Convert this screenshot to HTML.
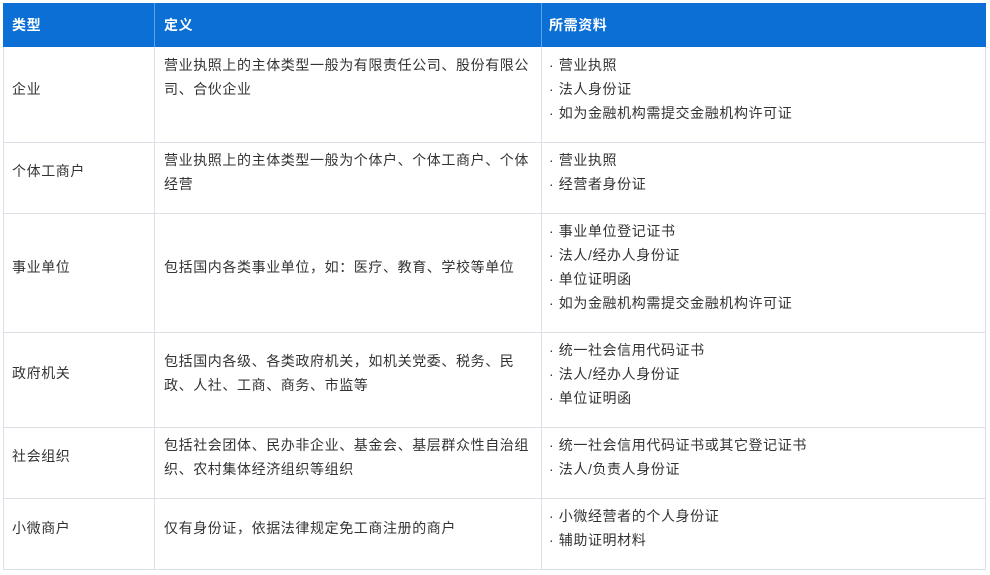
<!DOCTYPE html>
<html><head><meta charset="utf-8"><style>
body{margin:0;width:990px;height:575px;background:#fff;position:relative;overflow:hidden;font-family:"Liberation Sans","Noto Sans CJK SC",sans-serif;font-size:14px;letter-spacing:0.6px;color:#333}
.h{position:absolute;top:3px;left:3px;width:983px;height:44px;background:#0b6fd6}
.t{position:absolute;line-height:24px;white-space:nowrap}
.w{color:#fff;font-weight:bold}
.hl{position:absolute;left:3px;width:983px;height:1px;background:#dcdfe6}
.vl{position:absolute;width:1px;background:#dcdfe6}
</style></head><body>
<div class="h"></div>
<div class="vl" style="left:154px;top:3px;height:44px;background:#5da1e8"></div>
<div class="vl" style="left:541px;top:3px;height:44px;background:#5da1e8"></div>
<div class="vl" style="left:3px;top:47px;height:522px"></div>
<div class="vl" style="left:154px;top:47px;height:522px"></div>
<div class="vl" style="left:541px;top:47px;height:522px"></div>
<div class="vl" style="left:985px;top:47px;height:522px"></div>
<div class="hl" style="top:142px"></div>
<div class="hl" style="top:213px"></div>
<div class="hl" style="top:332px"></div>
<div class="hl" style="top:427px"></div>
<div class="hl" style="top:498px"></div>
<div class="hl" style="top:569px"></div>

<div class="t w" style="left:12px;top:13px">类型</div>
<div class="t w" style="left:164px;top:13px">定义</div>
<div class="t w" style="left:549px;top:13px">所需资料</div>

<div class="t" style="left:12px;top:77px">企业</div>
<div class="t" style="left:164px;top:53px">营业执照上的主体类型一般为有限责任公司、股份有限公<br>司、合伙企业</div>
<div class="t" style="left:549px;top:53px">· 营业执照<br>· 法人身份证<br>· 如为金融机构需提交金融机构许可证</div>

<div class="t" style="left:12px;top:159px">个体工商户</div>
<div class="t" style="left:164px;top:148px">营业执照上的主体类型一般为个体户、个体工商户、个体<br>经营</div>
<div class="t" style="left:549px;top:148px">· 营业执照<br>· 经营者身份证</div>

<div class="t" style="left:12px;top:255px">事业单位</div>
<div class="t" style="left:164px;top:255px">包括国内各类事业单位，如：医疗、教育、学校等单位</div>
<div class="t" style="left:549px;top:219px">· 事业单位登记证书<br>· 法人/经办人身份证<br>· 单位证明函<br>· 如为金融机构需提交金融机构许可证</div>

<div class="t" style="left:12px;top:361px">政府机关</div>
<div class="t" style="left:164px;top:349px">包括国内各级、各类政府机关，如机关党委、税务、民<br>政、人社、工商、商务、市监等</div>
<div class="t" style="left:549px;top:338px">· 统一社会信用代码证书<br>· 法人/经办人身份证<br>· 单位证明函</div>

<div class="t" style="left:12px;top:444px">社会组织</div>
<div class="t" style="left:164px;top:433px">包括社会团体、民办非企业、基金会、基层群众性自治组<br>织、农村集体经济组织等组织</div>
<div class="t" style="left:549px;top:433px">· 统一社会信用代码证书或其它登记证书<br>· 法人/负责人身份证</div>

<div class="t" style="left:12px;top:516px">小微商户</div>
<div class="t" style="left:164px;top:516px">仅有身份证，依据法律规定免工商注册的商户</div>
<div class="t" style="left:549px;top:504px">· 小微经营者的个人身份证<br>· 辅助证明材料</div>
</body></html>
